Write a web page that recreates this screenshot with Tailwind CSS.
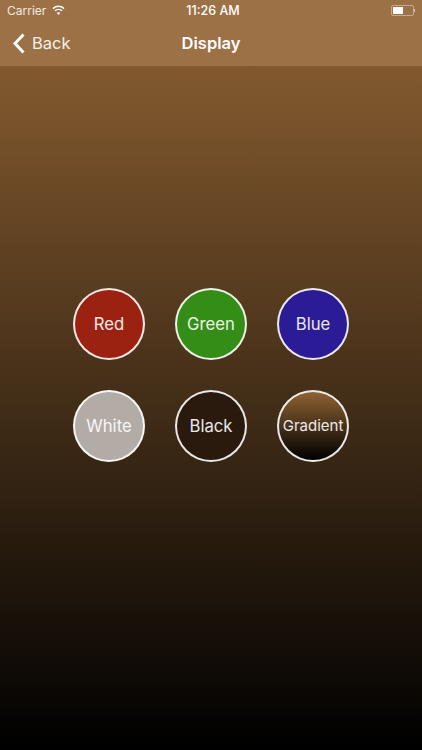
<!DOCTYPE html>
<html>
<head>
<meta charset="utf-8">
<script src="https://cdn.jsdelivr.net/npm/@tailwindcss/browser@4"></script>
</head>
<body>
<div class="w-[422px] h-[750px] flex flex-col overflow-hidden text-white font-['Inter',sans-serif] bg-linear-to-b/srgb from-[#8f6233] to-black">
  <header class="h-[66px] shrink-0 bg-[#9c7146] flex flex-col">
    <div class="h-[20px] relative flex items-center justify-between px-[7px] text-[12px] leading-none">
      <div class="flex items-center gap-[6px] text-white/85">
        <span class="pt-[2px]">Carrier</span>
        <svg class="w-[13px] h-[10px]" viewBox="0 0 13 10" fill="none" stroke="white" stroke-width="1.5"><path d="M1 3.6 C4 .6 9 .6 12 3.6"/><path d="M3 5.8 C5 3.9 8 3.9 10 5.8"/><path d="M6.5 10 L4.7 7.8 C5.7 7 7.3 7 8.3 7.8 Z" fill="white" stroke="none"/></svg>
      </div>
      <span class="absolute left-[4px] right-0 pt-[2px] text-center font-medium text-[12.5px]">11:26 AM</span>
      <div class="flex items-center">
        <div class="w-[23px] h-[11px] rounded-[2px] border border-white/40 p-px"><div class="w-[10px] h-full bg-white"></div></div>
        <div class="w-[1.5px] h-[3px] bg-white/60"></div>
      </div>
    </div>
    <nav class="h-[46px] relative flex items-center pl-[13px]">
      <div class="flex items-center gap-[7px] pt-[1px]">
        <svg class="w-[12px] h-[21px]" viewBox="0 0 12 21" fill="none" stroke="white" stroke-width="3"><path d="M10.5 1.5 L2 10.5 L10.5 19.5"/></svg>
        <span class="text-[16.5px] text-white/90 leading-none">Back</span>
      </div>
      <h1 class="absolute left-0 right-0 text-center text-[16.5px] font-semibold leading-none pt-[1px]">Display</h1>
    </nav>
  </header>
  <main class="flex-1 flex flex-col items-center justify-center gap-[30px] pb-[66px]">
    <div class="flex gap-[30px]">
      <div class="w-[72px] h-[72px] pt-[2px] rounded-full border-2 border-white/90 flex items-center justify-center text-[16.7px] text-white/90 bg-[#9b2211]">Red</div>
      <div class="w-[72px] h-[72px] pt-[2px] rounded-full border-2 border-white/90 flex items-center justify-center text-[16.7px] text-white/90 bg-[#348d16]">Green</div>
      <div class="w-[72px] h-[72px] pt-[2px] rounded-full border-2 border-white/90 flex items-center justify-center text-[16.7px] text-white/90 bg-[#2b1b94]">Blue</div>
    </div>
    <div class="flex gap-[30px]">
      <div class="w-[72px] h-[72px] pt-[2px] rounded-full border-2 border-white/90 flex items-center justify-center text-[16.7px] text-white/90 bg-[#b3aba5]">White</div>
      <div class="w-[72px] h-[72px] pt-[2px] rounded-full border-2 border-white/90 flex items-center justify-center text-[16.7px] text-white/90 bg-[#2a1a0e]">Black</div>
      <div class="w-[72px] h-[72px] rounded-full border-2 border-white/90 flex items-center justify-center text-[15px] text-white/90 bg-linear-to-b/srgb from-[#8f6233] to-black">Gradient</div>
    </div>
  </main>
</div>
</body>
</html>
